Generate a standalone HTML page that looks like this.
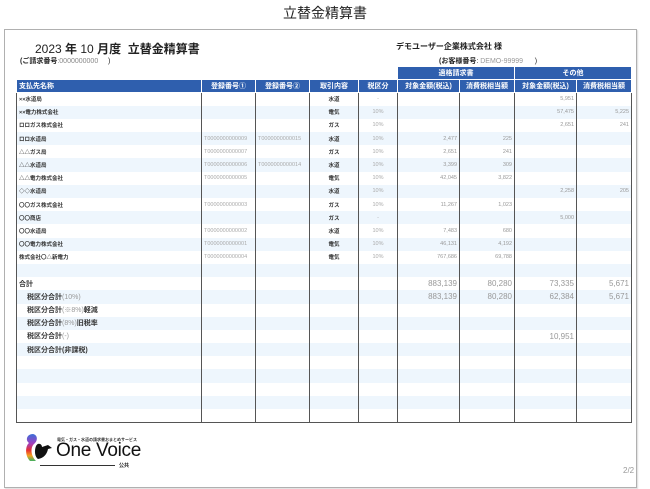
<!DOCTYPE html>
<html><head><meta charset="utf-8"><style>
*{margin:0;padding:0;box-sizing:border-box}
body{width:650px;height:489px;background:#fff;font-family:"Liberation Sans","Noto Sans CJK JP",sans-serif;position:relative;overflow:hidden;color:#222}
.abs{position:absolute;white-space:nowrap}
#frame{position:absolute;left:4px;top:29px;width:633px;height:459px;border:1px solid #b0b0b0;box-shadow:1px 1px 1px #ddd}
table{position:absolute;left:16px;top:66px;border-collapse:collapse;table-layout:fixed}
td{font-size:5.5px;height:13.2px;padding:0 2px;border-left:1px solid #555;border-right:1px solid #555;white-space:nowrap;overflow:hidden}
tr.h td{background:#2f5fae;color:#fff;font-weight:bold;font-size:7px;border:1px solid #fff;height:13px}
tr.h td.e{background:#fff;border:none}
tr.g td{text-align:center}
tr.h2 td:first-child{text-align:left}
tr.h2 td{text-align:center}
tbody tr:nth-child(even) td{background:#eef6fd}
td.n{font-weight:bold;color:#333}
td.c{text-align:center;color:#333;font-weight:bold}
td.t{text-align:center;color:#aaa}
td.r{text-align:right;color:#999}
td.reg{color:#aaa}
td.s{font-weight:bold;font-size:7px;color:#333}
td.s span{font-weight:normal;color:#999}
td.si{padding-left:10px}
td.rs{text-align:right;color:#999;font-size:8px}
tbody tr:last-child td{border-bottom:1px solid #555}
</style></head><body>
<div class="abs" style="left:0;width:650px;text-align:center;top:3px;font-size:14px">立替金精算書</div>
<div id="frame"></div>
<div class="abs" style="left:35px;top:40px;font-size:12px">2023 <b>年</b> 10 <b>月度</b>&nbsp; <b>立替金精算書</b></div>
<div class="abs" style="left:20px;top:56px;font-size:7px"><b>(ご請求番号</b><span style="color:#888">:0000000000</span>&nbsp;&nbsp;&nbsp;&nbsp;&nbsp;)</div>
<div class="abs" style="left:396px;top:41px;font-size:8px;font-weight:bold">デモユーザー企業株式会社 様</div>
<div class="abs" style="left:439px;top:56px;font-size:7px"><b>(お客様番号</b>: <span style="color:#999">DEMO-99999</span>&nbsp;&nbsp;&nbsp;&nbsp;&nbsp;&nbsp;)</div>
<table>
<colgroup><col style="width:185px"><col style="width:54px"><col style="width:54px"><col style="width:49px"><col style="width:39px"><col style="width:62px"><col style="width:55px"><col style="width:62px"><col style="width:55px"></colgroup>
<thead>
<tr class="h g"><td class="e"></td><td class="e"></td><td class="e"></td><td class="e"></td><td class="e"></td><td colspan="2">適格請求書</td><td colspan="2">その他</td></tr>
<tr class="h h2"><td>支払先名称</td><td>登録番号①</td><td>登録番号②</td><td>取引内容</td><td>税区分</td><td>対象金額(税込)</td><td>消費税相当額</td><td>対象金額(税込)</td><td>消費税相当額</td></tr>
</thead>
<tbody>
<tr><td class="n">××水道局</td><td></td><td></td><td class="c">水道</td><td class="t">-</td><td></td><td></td><td class="r">5,951</td><td></td></tr>
<tr><td class="n">××電力株式会社</td><td></td><td></td><td class="c">電気</td><td class="t">10%</td><td></td><td></td><td class="r">57,475</td><td class="r">5,225</td></tr>
<tr><td class="n">ロロガス株式会社</td><td></td><td></td><td class="c">ガス</td><td class="t">10%</td><td></td><td></td><td class="r">2,651</td><td class="r">241</td></tr>
<tr><td class="n">ロロ水道局</td><td class="reg">T0000000000009</td><td class="reg">T0000000000015</td><td class="c">水道</td><td class="t">10%</td><td class="r">2,477</td><td class="r">225</td><td></td><td></td></tr>
<tr><td class="n">△△ガス局</td><td class="reg">T0000000000007</td><td></td><td class="c">ガス</td><td class="t">10%</td><td class="r">2,651</td><td class="r">241</td><td></td><td></td></tr>
<tr><td class="n">△△水道局</td><td class="reg">T0000000000006</td><td class="reg">T0000000000014</td><td class="c">水道</td><td class="t">10%</td><td class="r">3,399</td><td class="r">309</td><td></td><td></td></tr>
<tr><td class="n">△△電力株式会社</td><td class="reg">T0000000000005</td><td></td><td class="c">電気</td><td class="t">10%</td><td class="r">42,045</td><td class="r">3,822</td><td></td><td></td></tr>
<tr><td class="n">◇◇水道局</td><td></td><td></td><td class="c">水道</td><td class="t">10%</td><td></td><td></td><td class="r">2,258</td><td class="r">205</td></tr>
<tr><td class="n">〇〇ガス株式会社</td><td class="reg">T0000000000003</td><td></td><td class="c">ガス</td><td class="t">10%</td><td class="r">11,267</td><td class="r">1,023</td><td></td><td></td></tr>
<tr><td class="n">〇〇商店</td><td></td><td></td><td class="c">ガス</td><td class="t">-</td><td></td><td></td><td class="r">5,000</td><td></td></tr>
<tr><td class="n">〇〇水道局</td><td class="reg">T0000000000002</td><td></td><td class="c">水道</td><td class="t">10%</td><td class="r">7,483</td><td class="r">680</td><td></td><td></td></tr>
<tr><td class="n">〇〇電力株式会社</td><td class="reg">T0000000000001</td><td></td><td class="c">電気</td><td class="t">10%</td><td class="r">46,131</td><td class="r">4,192</td><td></td><td></td></tr>
<tr><td class="n">株式会社〇△新電力</td><td class="reg">T0000000000004</td><td></td><td class="c">電気</td><td class="t">10%</td><td class="r">767,686</td><td class="r">69,788</td><td></td><td></td></tr>
<tr><td></td><td></td><td></td><td></td><td></td><td></td><td></td><td></td><td></td></tr>
<tr><td class="s">合計</td><td></td><td></td><td></td><td></td><td class="rs">883,139</td><td class="rs">80,280</td><td class="rs">73,335</td><td class="rs">5,671</td></tr>
<tr><td class="s si">税区分合計<span>(10%)</span></td><td></td><td></td><td></td><td></td><td class="rs">883,139</td><td class="rs">80,280</td><td class="rs">62,384</td><td class="rs">5,671</td></tr>
<tr><td class="s si">税区分合計<span>(※8%)</span>軽減</td><td></td><td></td><td></td><td></td><td></td><td></td><td></td><td></td></tr>
<tr><td class="s si">税区分合計<span>(8%)</span>旧税率</td><td></td><td></td><td></td><td></td><td></td><td></td><td></td><td></td></tr>
<tr><td class="s si">税区分合計<span>(-)</span></td><td></td><td></td><td></td><td></td><td></td><td></td><td class="rs">10,951</td><td></td></tr>
<tr><td class="s si">税区分合計(非課税)</td><td></td><td></td><td></td><td></td><td></td><td></td><td></td><td></td></tr>
<tr><td></td><td></td><td></td><td></td><td></td><td></td><td></td><td></td><td></td></tr>
<tr><td></td><td></td><td></td><td></td><td></td><td></td><td></td><td></td><td></td></tr>
<tr><td></td><td></td><td></td><td></td><td></td><td></td><td></td><td></td><td></td></tr>
<tr><td></td><td></td><td></td><td></td><td></td><td></td><td></td><td></td><td></td></tr>
<tr><td></td><td></td><td></td><td></td><td></td><td></td><td></td><td></td><td></td></tr>
</tbody></table>
<svg class="abs" style="left:24px;top:432px" width="32" height="32" viewBox="0 0 32 32">
<defs><linearGradient id="gr" x1="0" y1="0" x2="0" y2="1"><stop offset="0" stop-color="#3a6fd8"/><stop offset=".35" stop-color="#a040c0"/><stop offset=".6" stop-color="#e83030"/><stop offset=".8" stop-color="#f5a020"/><stop offset="1" stop-color="#40b060"/></linearGradient></defs>
<path d="M9 2 C3 2 1 8 5 11 C1 14 1 24 6 29 L12 29 C7 24 6 16 10 12 C14 9 14 3 9 2Z" fill="url(#gr)"/>
<path d="M12 14 C14 10 18 12 18 15 L24 13 L28 16 L24 17 C23 22 20 26 14 27 C11 25 10 19 12 14Z" fill="#111"/>
</svg>
<div class="abs" style="left:57px;top:437px;font-size:4px;font-weight:bold;color:#333">電気・ガス・水道の請求書おまとめサービス</div>
<div class="abs" style="left:56px;top:440px;font-size:19px;color:#111;letter-spacing:-0.3px">One Voice</div>
<div class="abs" style="left:40px;top:465px;width:75px;height:1px;background:#333"></div>
<div class="abs" style="left:119px;top:462px;font-size:5px;font-weight:bold">公共</div>
<div class="abs" style="left:623px;top:466px;font-size:8px;color:#999">2/2</div>
</body></html>
